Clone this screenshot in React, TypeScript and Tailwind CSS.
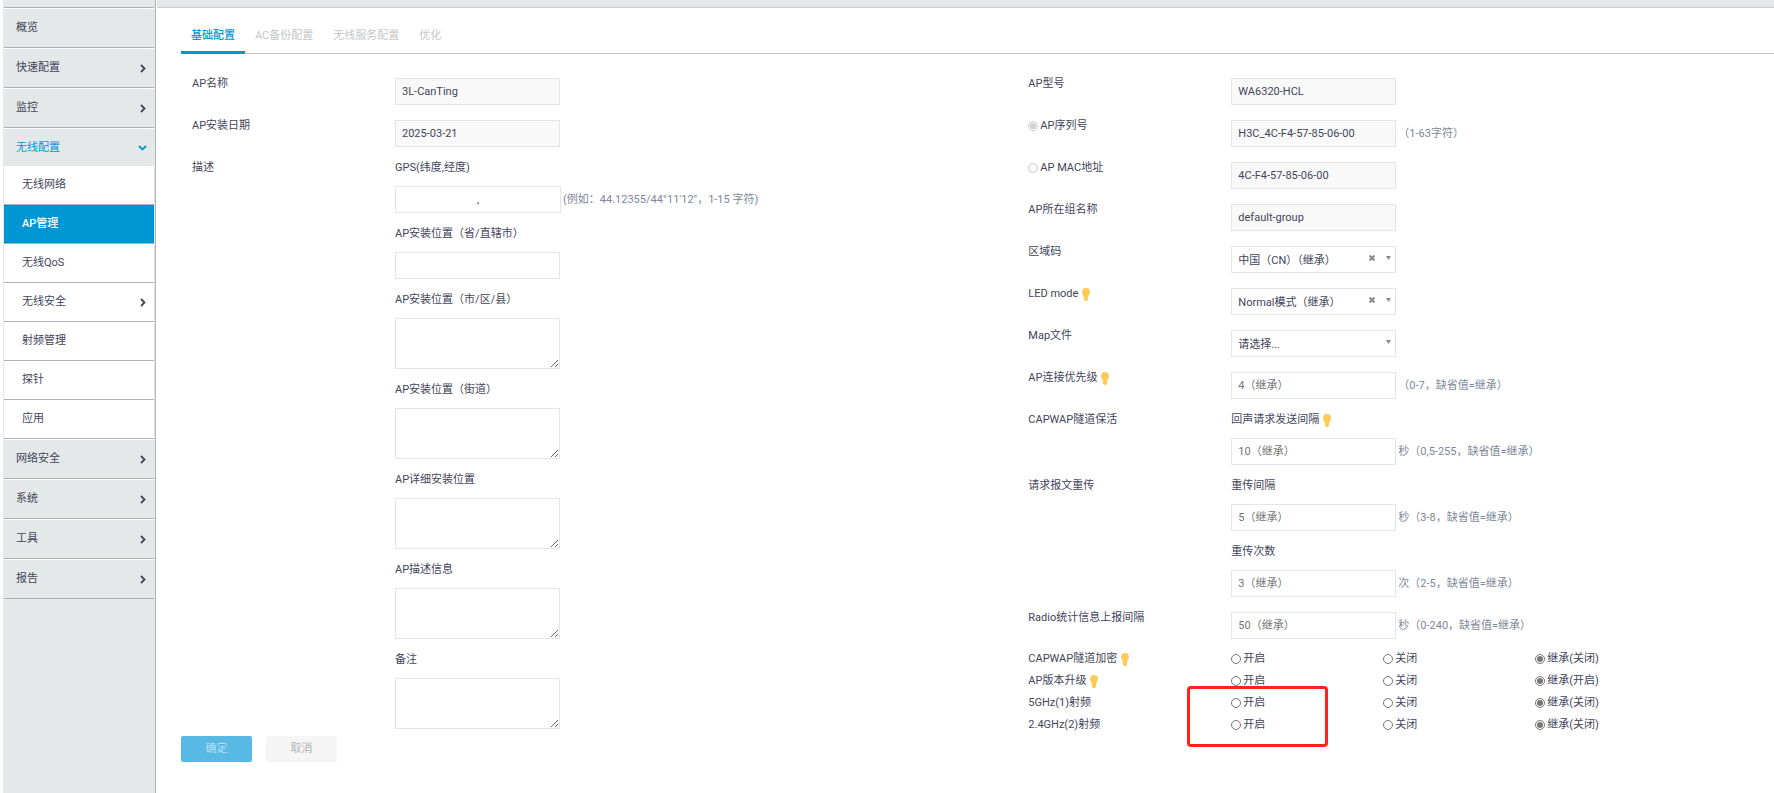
import { useState, type ReactNode } from 'react';

const FIELD = 'block w-[165px] h-[27px] border border-[#e3e6e6] px-[6px] outline-none placeholder:text-[#757575]';

interface MenuItem {
  label: string;
  arrow?: boolean;
  children?: MenuItem[];
}

const MENU: MenuItem[] = [
  { label: '概览' },
  { label: '快速配置', arrow: true },
  { label: '监控', arrow: true },
  {
    label: '无线配置',
    children: [
      { label: '无线网络' },
      { label: 'AP管理' },
      { label: '无线QoS' },
      { label: '无线安全', arrow: true },
      { label: '射频管理' },
      { label: '探针' },
      { label: '应用' },
    ],
  },
  { label: '网络安全', arrow: true },
  { label: '系统', arrow: true },
  { label: '工具', arrow: true },
  { label: '报告', arrow: true },
];

const TABS = ['基础配置', 'AC备份配置', '无线服务配置', '优化'];

const LOCATION_AREAS = ['AP安装位置（市/区/县）', 'AP安装位置（街道）', 'AP详细安装位置', 'AP描述信息', '备注'];

const SWITCHES = [
  { name: 'capwap-encrypt', label: 'CAPWAP隧道加密', tip: true, inherit: '继承(关闭)' },
  { name: 'ap-upgrade', label: 'AP版本升级', tip: true, inherit: '继承(开启)' },
  { name: 'radio-5g', label: '5GHz(1)射频', tip: false, inherit: '继承(关闭)' },
  { name: 'radio-24g', label: '2.4GHz(2)射频', tip: false, inherit: '继承(关闭)' },
];

function ChevronRight() {
  return (
    <svg width="6" height="9" viewBox="0 0 6 9" fill="none" stroke="currentColor" strokeWidth="1.8">
      <path d="M1 1l3.5 3.5L1 8" />
    </svg>
  );
}

function ChevronDown() {
  return (
    <svg width="9" height="6" viewBox="0 0 9 6" fill="none" stroke="currentColor" strokeWidth="1.8">
      <path d="M1 1l3.5 3.5L8 1" />
    </svg>
  );
}

function Bulb() {
  return (
    <svg width="8" height="13" viewBox="0 0 8 13" fill="#ffca55" className="shrink-0">
      <path d="M4 0a4 4 0 0 1 4 4c0 2-1.300 3-1.700 4.600L6 11.500 5 13H3l-1-1.500-.3-2.900C1.300 7 0 6 0 4a4 4 0 0 1 4-4z" />
    </svg>
  );
}

function Sidebar() {
  return (
    <nav className="w-[153px] shrink-0 px-px bg-[#e4e8e8] border-r border-[#b3b4b8]">
      <ul className="mt-[7px] border-t border-[#b0b0b0]">
        {MENU.map((item) => (
          <li key={item.label}>
            <a
              href="#"
              className={
                item.children
                  ? 'flex items-center justify-between h-[38px] pl-3 pr-[7px] border-t border-white text-[#0096d6]'
                  : 'flex items-center justify-between h-10 pl-3 pr-2 border-t border-t-white border-b border-b-[#b0b0b0]'
              }
            >
              {item.label}
              {item.children && <ChevronDown />}
              {item.arrow && <ChevronRight />}
            </a>
            {item.children && (
              <ul className="bg-white">
                {item.children.map((sub) => (
                  <li key={sub.label}>
                    <a
                      href="#"
                      className={`flex items-center justify-between h-[39px] pl-[18px] pr-2 border-b border-[#b0b0b0] ${
                        sub.label === 'AP管理' ? 'bg-[#0096d6] text-white font-medium' : ''
                      }`}
                    >
                      {sub.label}
                      {sub.arrow && <ChevronRight />}
                    </a>
                  </li>
                ))}
              </ul>
            )}
          </li>
        ))}
      </ul>
    </nav>
  );
}

// Label cell on the left, one or more field blocks on the right
function Row({ label, children }: { label: ReactNode; children: ReactNode }) {
  return (
    <div className="flex">
      <div className="w-[203px] shrink-0">{label}</div>
      <div className="min-w-0">{children}</div>
    </div>
  );
}

function Field({ hint, children }: { hint?: string; children: ReactNode }) {
  return (
    <div className="flex items-center gap-[2px] pt-[2px] pb-[13px]">
      {children}
      {hint && <span className="text-[#7c8899] whitespace-nowrap">{hint}</span>}
    </div>
  );
}

function SubField({ id, label, tip, hint, children }: { id: string; label: string; tip?: boolean; hint?: string; children: ReactNode }) {
  return (
    <div>
      <div className="flex items-center gap-1 h-4 mb-2">
        <label htmlFor={id}>{label}</label>
        {tip && <Bulb />}
      </div>
      <Field hint={hint}>{children}</Field>
    </div>
  );
}

function TipLabel({ id, children }: { id: string; children: ReactNode }) {
  return (
    <span className="flex items-center gap-1 h-4">
      <label htmlFor={id}>{children}</label>
      <Bulb />
    </span>
  );
}

function SelectBox({ id, value, clearable }: { id: string; value: string; clearable?: boolean }) {
  return (
    <div className="relative">
      <select id={id} className={`${FIELD} pt-[2px] appearance-none bg-white`}>
        <option>{value}</option>
      </select>
      {clearable && (
        <button type="button" aria-label="清除" className="absolute right-[21px] top-[9px] text-[#8a8a8a]">
          <svg width="6" height="6" viewBox="0 0 6 6" stroke="currentColor" strokeWidth="2">
            <path d="M.5.5l5 5M5.500.500l-5 5" />
          </svg>
        </button>
      )}
      <svg width="5" height="4" viewBox="0 0 5 4" fill="#8a8a8a" className="absolute right-[5px] top-[10px] pointer-events-none">
        <path d="M0 0h5L2.500 4z" />
      </svg>
    </div>
  );
}

function LeftColumn() {
  return (
    <div className="pl-[11px]">
      <Row label={<label htmlFor="ap-name">AP名称</label>}>
        <Field>
          <input id="ap-name" disabled value="3L-CanTing" className={`${FIELD} bg-[#f9f9f9]`} />
        </Field>
      </Row>
      <Row label={<label htmlFor="ap-date">AP安装日期</label>}>
        <Field>
          <input id="ap-date" disabled value="2025-03-21" className={`${FIELD} bg-[#f9f9f9]`} />
        </Field>
      </Row>
      <Row label="描述">
        <SubField id="gps-lat" label="GPS(纬度,经度)" hint={'(例如：44.12355/44°11\'12"，1-15 字符)'}>
          <div className="flex items-center w-[166px] h-[27px] border border-[#e3e6e6]">
            <input id="gps-lat" aria-label="纬度" className="flex-1 min-w-0 px-[6px] outline-none" />
            <span>,</span>
            <input aria-label="经度" className="flex-1 min-w-0 px-[6px] outline-none" />
          </div>
        </SubField>
        <SubField id="province" label="AP安装位置（省/直辖市）">
          <input id="province" className={FIELD} />
        </SubField>
        {LOCATION_AREAS.map((label, i) => (
          <SubField key={label} id={`area-${i}`} label={label}>
            <textarea id={`area-${i}`} className="block w-[165px] h-[51px] border border-[#e3e6e6] px-[6px] outline-none resize" />
          </SubField>
        ))}
      </Row>
    </div>
  );
}

function RightColumn() {
  return (
    <div className="pl-[11px]">
      <Row label={<label htmlFor="ap-model">AP型号</label>}>
        <Field>
          <input id="ap-model" disabled value="WA6320-HCL" className={`${FIELD} bg-[#f9f9f9]`} />
        </Field>
      </Row>
      <Row
        label={
          <label className="flex items-center gap-[2px]">
            <input type="radio" name="ap-id" disabled defaultChecked className="w-[10px] h-[10px]" />
            AP序列号
          </label>
        }
      >
        <Field hint="（1-63字符）">
          <input aria-label="AP序列号" disabled value="H3C_4C-F4-57-85-06-00" className={`${FIELD} bg-[#f9f9f9]`} />
        </Field>
      </Row>
      <Row
        label={
          <label className="flex items-center gap-[2px]">
            <input type="radio" name="ap-id" disabled className="w-[10px] h-[10px]" />
            AP MAC地址
          </label>
        }
      >
        <Field>
          <input aria-label="AP MAC地址" disabled value="4C-F4-57-85-06-00" className={`${FIELD} bg-[#f9f9f9]`} />
        </Field>
      </Row>
      <Row label={<label htmlFor="ap-group">AP所在组名称</label>}>
        <Field>
          <input id="ap-group" disabled value="default-group" className={`${FIELD} bg-[#f9f9f9]`} />
        </Field>
      </Row>
      <Row label={<label htmlFor="region">区域码</label>}>
        <Field>
          <SelectBox id="region" value="中国（CN）（继承）" clearable />
        </Field>
      </Row>
      <Row label={<TipLabel id="led">LED mode</TipLabel>}>
        <Field>
          <SelectBox id="led" value="Normal模式（继承）" clearable />
        </Field>
      </Row>
      <Row label={<label htmlFor="map">Map文件</label>}>
        <Field>
          <SelectBox id="map" value="请选择..." />
        </Field>
      </Row>
      <Row label={<TipLabel id="priority">AP连接优先级</TipLabel>}>
        <Field hint="（0-7，缺省值=继承）">
          <input id="priority" placeholder="4（继承）" className={FIELD} />
        </Field>
      </Row>
      <Row label="CAPWAP隧道保活">
        <SubField id="echo" label="回声请求发送间隔" tip hint="秒（0,5-255，缺省值=继承）">
          <input id="echo" placeholder="10（继承）" className={FIELD} />
        </SubField>
      </Row>
      <Row label="请求报文重传">
        <SubField id="retry-gap" label="重传间隔" hint="秒（3-8，缺省值=继承）">
          <input id="retry-gap" placeholder="5（继承）" className={FIELD} />
        </SubField>
        <SubField id="retry-count" label="重传次数" hint="次（2-5，缺省值=继承）">
          <input id="retry-count" placeholder="3（继承）" className={FIELD} />
        </SubField>
      </Row>
      <Row label={<label htmlFor="stat-gap">Radio统计信息上报间隔</label>}>
        <Field hint="秒（0-240，缺省值=继承）">
          <input id="stat-gap" placeholder="50（继承）" className={FIELD} />
        </Field>
      </Row>
      <div className="relative -mt-px">
        {SWITCHES.map((s) => (
          <fieldset key={s.name} className="flex h-[22px]">
            <div className="w-[203px] shrink-0 flex items-center gap-1 h-4">
              {s.label}
              {s.tip && <Bulb />}
            </div>
            {['开启', '关闭', s.inherit].map((option, i) => (
              <label key={option + i} className="w-[152px] h-4 flex items-center gap-[2px]">
                <input type="radio" name={s.name} defaultChecked={i === 2} className="w-[10px] h-[10px] accent-[#767676]" />
                {option}
              </label>
            ))}
          </fieldset>
        ))}
        {/* Highlight around the two radio switches */}
        <div className="absolute left-[159px] top-[35px] w-[141px] h-[61px] border-3 border-[#ff2418] rounded-sm pointer-events-none" />
      </div>
    </div>
  );
}

export default function App() {
  const [tab, setTab] = useState(TABS[0]);

  return (
    <div className="flex min-h-screen pl-[3px] bg-white text-[11px] leading-4 text-[#42455a] font-[Roboto,'Noto_Sans_CJK_SC',sans-serif]">
      <Sidebar />
      <main className="flex-1 min-w-0 ml-px">
        <div className="h-2 bg-[#e6e7e8] border-b border-[#cfcfd0]" />
        <div className="pl-6">
          <div role="tablist" className="flex h-[46px] border-b border-[#c5c7c9]">
            {TABS.map((name) => (
              <button
                key={name}
                type="button"
                role="tab"
                aria-selected={tab === name}
                onClick={() => setTab(name)}
                className={`h-[46px] pt-3 px-[10px] border-b-3 cursor-pointer ${
                  tab === name ? 'border-[#0096d6] text-[#0096d6] font-medium' : 'border-transparent text-[#c5c7c9]'
                }`}
              >
                {name}
              </button>
            ))}
          </div>
          <form className="pt-[22px]" onSubmit={(e) => e.preventDefault()}>
            <div className="grid grid-cols-[21fr_19fr]">
              <LeftColumn />
              <RightColumn />
            </div>
            <div className="flex gap-[14px] -mt-[6px]">
              <button type="submit" className="w-[71px] h-[26px] rounded-xs bg-[#58b9e4] text-[#b5e0f4]">
                确定
              </button>
              <button type="button" className="w-[71px] h-[26px] rounded-xs bg-[#f5f5f5] text-[#adb5bb]">
                取消
              </button>
            </div>
          </form>
        </div>
      </main>
    </div>
  );
}
